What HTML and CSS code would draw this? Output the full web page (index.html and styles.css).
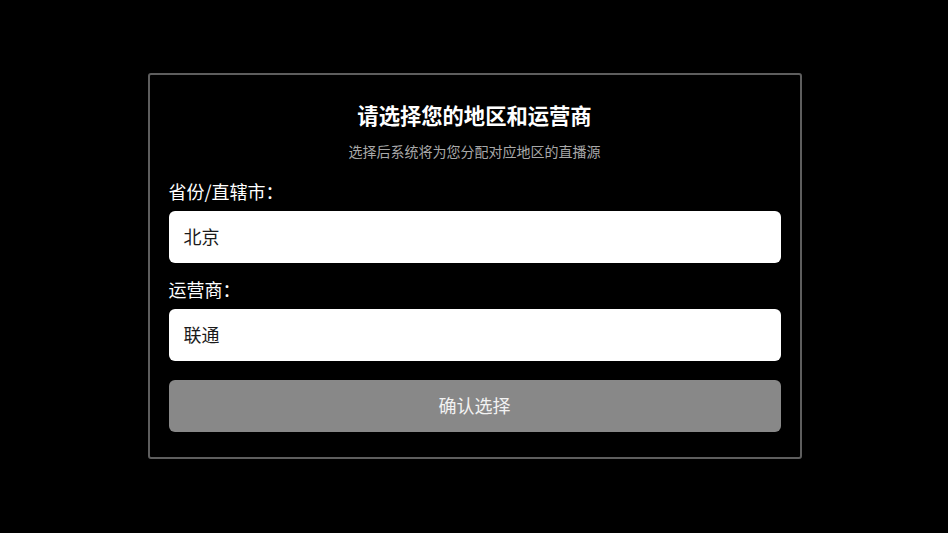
FILE: index.html
```html
<!DOCTYPE html>
<html lang="zh-CN">
<head>
<meta charset="utf-8">
<title>选择地区和运营商</title>
<link rel="stylesheet" href="styles.css">
</head>
<body>
<main class="page">
  <section class="panel">
    <h1 class="title">请选择您的地区和运营商</h1>
    <p class="subtitle">选择后系统将为您分配对应地区的直播源</p>
    <label class="label">省份/直辖市：</label>
    <div class="field">北京</div>
    <label class="label label-second">运营商：</label>
    <div class="field">联通</div>
    <button class="confirm">确认选择</button>
  </section>
</main>
</body>
</html>
```

FILE: styles.css
```css
html, body {
  margin: 0;
  padding: 0;
  background: #000;
}
body {
  width: 948px;
  height: 533px;
  font-family: "Noto Sans CJK SC", "Noto Sans", sans-serif;
  color: #fff;
}
.page {
  height: 533px;
  display: flex;
  align-items: center;
  justify-content: center;
}
.panel {
  box-sizing: border-box;
  width: 654px;
  height: 386px;
  margin: -1px 0 0 1px;
  border: 2px solid #5e5e5e;
  border-radius: 3px;
  padding: 25px 19px 25px 19px;
  display: flex;
  flex-direction: column;
}
.title {
  margin: 0;
  font-size: 21.3px;
  line-height: 30px;
  font-weight: 700;
  text-align: center;
  color: #fff;
}
.subtitle {
  margin: 11px 0 0;
  font-size: 14px;
  line-height: 20px;
  text-align: center;
  color: #a8a8a8;
}
.label {
  margin-top: 18px;
  font-size: 18px;
  line-height: 24px;
  color: #fff;
}
.label-second {
  margin-top: 14px;
}
.field {
  margin-top: 8px;
  height: 52px;
  box-sizing: border-box;
  background: #fff;
  border-radius: 6px;
  padding: 0 15px 2px;
  display: flex;
  align-items: center;
  font-size: 18px;
  color: #1a1a1a;
}
.confirm {
  margin-top: 19px;
  height: 52px;
  border: none;
  border-radius: 6px;
  background: #888;
  color: #f2f2f2;
  font-family: inherit;
  font-size: 18px;
  padding: 0 0 2px;
}
```
